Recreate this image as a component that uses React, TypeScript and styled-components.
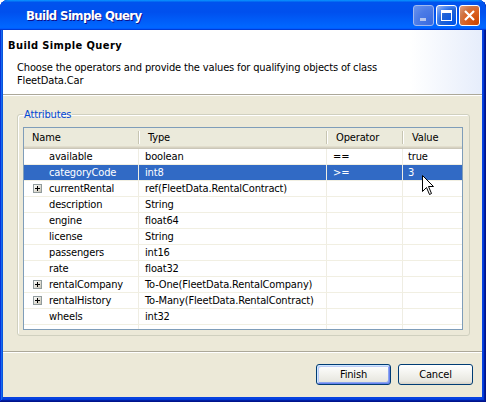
import React from "react";
import styled, { createGlobalStyle } from "styled-components";

const GlobalStyle = createGlobalStyle`
  html, body {
    margin: 0;
    padding: 0;
    background: #ffffff;
  }
  body {
    width: 486px;
    height: 402px;
    overflow: hidden;
    font-family: "DejaVu Sans Condensed", "Liberation Sans", sans-serif;
    font-size: 11px;
    letter-spacing: -0.15px;
  }
`;

const COLS = "115px 188px 76px 1fr";

const Window = styled.div`
  position: relative;
  width: 486px;
  height: 402px;
  display: flex;
  flex-direction: column;
  background: #0842e0;
  border-radius: 8px 8px 0 0;
  box-shadow: inset -1px -1px #00138c, inset 1px 1px #0831d9,
    inset -2px -2px #001ea0, inset 2px 2px #166aee, inset -3px -3px #003bda,
    inset 3px 3px #0855dd;
`;

const TitleBar = styled.div`
  height: 30px;
  flex-shrink: 0;
  display: flex;
  align-items: center;
  padding: 0 6px 0 26px;
  border-radius: 8px 8px 0 0;
  background: linear-gradient(
    180deg,
    #0997ff,
    #0053ee 8%,
    #0050ee 40%,
    #06f 88%,
    #06f 93%,
    #005bff 95%,
    #003dd7 96%,
    #003dd7
  );
`;

const TitleText = styled.span`
  flex: 1;
  color: #ffffff;
  font-family: "DejaVu Sans Condensed", "Liberation Sans", sans-serif;
  font-weight: bold;
  font-size: 13px;
  letter-spacing: -0.6px;
  text-shadow: 1px 1px #0f1089;
`;

const Controls = styled.div`
  display: flex;
  gap: 2px;
`;

const CtrlButton = styled.div<{ $kind: "min" | "max" | "close" }>`
  width: 21px;
  height: 21px;
  box-sizing: border-box;
  border: 1px solid ${(p) => (p.$kind === "min" ? "#9fb8ef" : "#ffffff")};
  border-radius: 3px;
  display: flex;
  align-items: center;
  justify-content: center;
  background: ${(p) =>
    p.$kind === "close"
      ? "radial-gradient(circle at 90% 90%, #cc4600 0%, #dc6527 55%, #cd7546 70%, #e5a080 100%)"
      : p.$kind === "min"
      ? "radial-gradient(circle at 90% 90%, #3a6be0 0%, #4a7ae6 55%, #6a94ee 100%)"
      : "radial-gradient(circle at 90% 90%, #0054e9 0%, #2263d5 55%, #4482f0 70%, #a3bbec 100%)"};
`;

const Body = styled.div`
  flex: 1;
  display: flex;
  flex-direction: column;
  margin: 0 4px 5px 3px;
  background: #ece9d8;
`;

const Header = styled.div`
  height: 65px;
  flex-shrink: 0;
  box-sizing: border-box;
  padding: 9px 0 0 5px;
  background: linear-gradient(90deg, #ffffff 85%, #e6edfb 100%);
  border-bottom: 1px solid #aca899;
`;

const HeaderTitle = styled.div`
  font-weight: bold;
  font-size: 11px;
  letter-spacing: 0.4px;
  line-height: 14px;
  color: #000;
`;

const HeaderDesc = styled.div`
  margin: 8px 0 0 9px;
  width: 372px;
  line-height: 13px;
  color: #000;
`;

const Content = styled.div`
  flex: 1;
  display: flex;
  flex-direction: column;
  padding: 12px 12px 0 14px;
  border-top: 1px solid #ffffff;
`;

const Group = styled.fieldset`
  flex: 1;
  margin: 0;
  padding: 0 6px 5px 5px;
  border: 1px solid #d0d0bf;
  border-radius: 3px;
  display: flex;
  flex-direction: column;
  min-height: 0;
  box-shadow: 1px 1px 0 #fff inset;
`;

const Legend = styled.legend`
  padding: 0 1px;
  color: #0046d5;
  line-height: 13px;
`;

const Table = styled.div`
  flex: 1;
  display: flex;
  flex-direction: column;
  margin-top: 6px;
  border: 1px solid #7f9db9;
  background: #ffffff;
`;

const HeadRow = styled.div`
  display: grid;
  grid-template-columns: ${COLS};
  height: 21px;
  box-sizing: border-box;
  background: #ebeadb;
  border-bottom: 1px solid #cbc7b8;
  box-shadow: inset 0 -1px #d6d2c2, inset 0 -2px #e2decd;
`;

const HeadCell = styled.div<{ $pad: number }>`
  position: relative;
  display: flex;
  align-items: center;
  padding-left: ${(p) => p.$pad}px;
  padding-bottom: 2px;
  color: #000;
  &:not(:last-child)::after {
    content: "";
    position: absolute;
    right: 0;
    top: 3px;
    bottom: 4px;
    width: 1px;
    background: #c7c5b2;
    box-shadow: 1px 0 #ffffff;
  }
`;

const Row = styled.div<{ $selected?: boolean }>`
  display: grid;
  grid-template-columns: ${COLS};
  height: 16px;
  box-sizing: border-box;
  border-bottom: 1px solid #f1efe2;
  background: ${(p) => (p.$selected ? "#316ac5" : "transparent")};
  color: ${(p) => (p.$selected ? "#ffffff" : "#000000")};
`;

const Cell = styled.div<{ $pad: number }>`
  display: flex;
  align-items: center;
  padding-left: ${(p) => p.$pad}px;
  white-space: nowrap;
  overflow: hidden;
  border-right: 1px solid #efede3;
  &:last-child {
    border-right: none;
  }
`;

const Filler = styled.div`
  flex: 1;
  display: grid;
  grid-template-columns: ${COLS};
`;

const FillerCell = styled.div`
  border-right: 1px solid #efede3;
  &:last-child {
    border-right: none;
  }
`;

const Expander = styled.span`
  display: inline-flex;
  width: 9px;
  height: 9px;
  margin: 0 7px 0 0;
`;

const Footer = styled.div`
  height: 46px;
  flex-shrink: 0;
  box-sizing: border-box;
  display: flex;
  justify-content: flex-end;
  align-items: flex-start;
  gap: 7px;
  padding: 12px 9px 0 0;
  border-top: 1px solid #aca899;
  box-shadow: inset 0 1px #ffffff;
  margin-top: 15px;
`;

const Button = styled.button<{ $default?: boolean }>`
  width: 75px;
  height: 21px;
  box-sizing: border-box;
  padding: 0;
  font-family: "DejaVu Sans Condensed", "Liberation Sans", sans-serif;
  font-size: 11px;
  letter-spacing: -0.15px;
  color: #000;
  border: 1px solid #003c74;
  border-radius: 3px;
  background: linear-gradient(180deg, #ffffff 0%, #f4f4f0 40%, #e8e7e0 85%, #d6d0c5 100%);
  box-shadow: ${(p) =>
    p.$default
      ? "inset 1px 1px #cee7ff, inset -1px -1px #6982ee, inset 2px 2px #bccbf5, inset -2px -2px #8aa5f0"
      : "none"};
`;

const Cursor = styled.svg`
  position: absolute;
  left: 422px;
  top: 175px;
`;

const PlusBox = () => (
  <svg width="9" height="9" viewBox="0 0 9 9">
    <defs>
      <linearGradient id="pb" x1="0" y1="0" x2="1" y2="1">
        <stop offset="0" stopColor="#ffffff" />
        <stop offset="1" stopColor="#c6c2b2" />
      </linearGradient>
    </defs>
    <rect x="0.5" y="0.5" width="8" height="8" fill="url(#pb)" stroke="#919b9c" />
    <path d="M2 4.5h5M4.5 2v5" stroke="#000" strokeWidth="1" />
  </svg>
);

type Attr = {
  name: string;
  type: string;
  op?: string;
  value?: string;
  expandable?: boolean;
  selected?: boolean;
};

const attrs: Attr[] = [
  { name: "available", type: "boolean", op: "==", value: "true" },
  { name: "categoryCode", type: "int8", op: ">=", value: "3", selected: true },
  { name: "currentRental", type: "ref(FleetData.RentalContract)", expandable: true },
  { name: "description", type: "String" },
  { name: "engine", type: "float64" },
  { name: "license", type: "String" },
  { name: "passengers", type: "int16" },
  { name: "rate", type: "float32" },
  { name: "rentalCompany", type: "To-One(FleetData.RentalCompany)", expandable: true },
  { name: "rentalHistory", type: "To-Many(FleetData.RentalContract)", expandable: true },
  { name: "wheels", type: "int32" },
];

const App = () => {
  return (
    <>
      <GlobalStyle />
      <Window>
        <TitleBar>
          <TitleText>Build Simple Query</TitleText>
          <Controls>
            <CtrlButton $kind="min">
              <svg width="13" height="13" viewBox="0 0 13 13">
                <rect x="3" y="9" width="6" height="3" fill="#b5c6ef" />
              </svg>
            </CtrlButton>
            <CtrlButton $kind="max">
              <svg width="13" height="13" viewBox="0 0 13 13">
                <rect x="1.5" y="1.5" width="10" height="10" fill="none" stroke="#fff" />
                <rect x="1" y="1" width="11" height="3" fill="#fff" />
              </svg>
            </CtrlButton>
            <CtrlButton $kind="close">
              <svg width="13" height="13" viewBox="0 0 13 13">
                <path d="M2 2L11 11M11 2L2 11" stroke="#fff" strokeWidth="2.2" />
              </svg>
            </CtrlButton>
          </Controls>
        </TitleBar>
        <Body>
          <Header>
            <HeaderTitle>Build Simple Query</HeaderTitle>
            <HeaderDesc>
              Choose the operators and provide the values for qualifying objects of class
              FleetData.Car
            </HeaderDesc>
          </Header>
          <Content>
            <Group>
              <Legend>Attributes</Legend>
              <Table>
                <HeadRow>
                  <HeadCell $pad={8}>Name</HeadCell>
                  <HeadCell $pad={9}>Type</HeadCell>
                  <HeadCell $pad={9}>Operator</HeadCell>
                  <HeadCell $pad={9}>Value</HeadCell>
                </HeadRow>
                {attrs.map((a) => (
                  <Row key={a.name} $selected={a.selected}>
                    <Cell $pad={a.expandable ? 9 : 25}>
                      {a.expandable && (
                        <Expander>
                          <PlusBox />
                        </Expander>
                      )}
                      {a.name}
                    </Cell>
                    <Cell $pad={6}>{a.type}</Cell>
                    <Cell $pad={6}>{a.op}</Cell>
                    <Cell $pad={5}>{a.value}</Cell>
                  </Row>
                ))}
                <Filler>
                  <FillerCell />
                  <FillerCell />
                  <FillerCell />
                  <FillerCell />
                </Filler>
              </Table>
            </Group>
          </Content>
          <Footer>
            <Button $default>Finish</Button>
            <Button>Cancel</Button>
          </Footer>
        </Body>
        <Cursor width="13" height="21" viewBox="0 0 13 21">
          <path
            d="M0.5 0.5V16.5L4.5 12.5L7.5 19.5L9.5 18.5L6.5 11.5H11.5Z"
            fill="#fff"
            stroke="#000"
            strokeWidth="1"
            strokeLinejoin="miter"
          />
        </Cursor>
      </Window>
    </>
  );
};

export default App;
